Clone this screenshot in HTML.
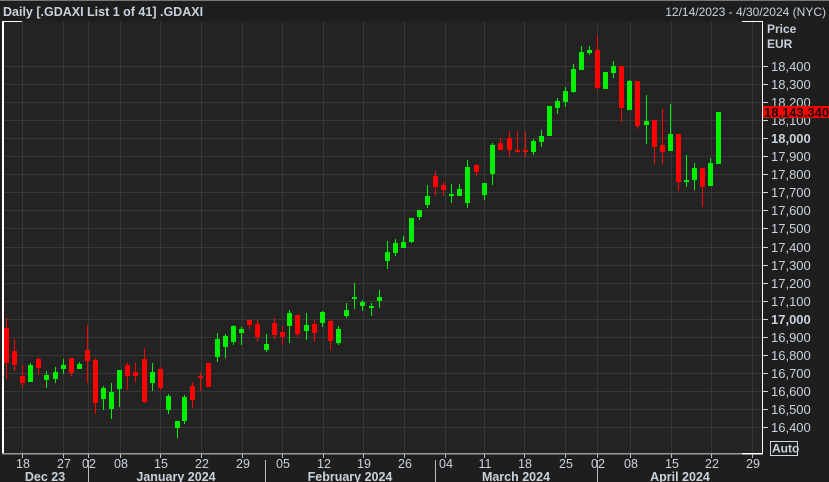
<!DOCTYPE html>
<html><head><meta charset="utf-8"><style>
html,body{margin:0;padding:0;background:#1e1e1f;width:829px;height:482px;overflow:hidden}
svg{display:block}
text{font-family:"Liberation Sans",sans-serif;fill:#c9d2dc}
</style></head><body>
<svg id="s" width="829" height="482" xmlns="http://www.w3.org/2000/svg">
<rect x="0" y="0" width="829" height="482" fill="#1e1e1f"/>
<rect x="0" y="0" width="829" height="1" fill="#777"/>
<rect x="2" y="21" width="760" height="432" fill="#222322"/>
<g id="grid"></g>
<g id="candles"></g>
<text x="3" y="16" font-size="12.5" font-weight="bold" fill="#c9d2dc">Daily [.GDAXI List 1 of 41] .GDAXI</text>
<text x="826" y="16" font-size="12" text-anchor="end">12/14/2023 - 4/30/2024 (NYC)</text>
<text x="767" y="33" font-size="12" font-weight="bold">Price</text>
<text x="767" y="48" font-size="12" font-weight="bold">EUR</text>
<g id="yax"></g>
<rect x="763" y="106" width="66" height="12" fill="#ff0000"/>
<text x="764" y="117" font-size="13" font-weight="bold" style="fill:#111">18,143.340</text>
<rect x="770.5" y="441.5" width="27" height="14" fill="none" stroke="#cfd6de"/>
<text x="772" y="452.5" font-size="12" font-weight="bold">Auto</text>
<rect x="2" y="21" width="2" height="433" fill="#fff"/>
<rect x="2" y="21" width="20" height="1" fill="#fff"/>
<rect x="742" y="21" width="20" height="1" fill="#fff"/>
<rect x="762" y="21" width="1" height="433" fill="#fff"/>
<rect x="2" y="453" width="740" height="1.5" fill="#999"/>
<rect x="742" y="453" width="21" height="1.5" fill="#fff"/>
<g id="xax"></g>
</svg>
<script>
var NS="http://www.w3.org/2000/svg";
function el(p,t,a,tx){var e=document.createElementNS(NS,t);for(var k in a)e.setAttribute(k,a[k]);if(tx!=null)e.textContent=tx;p.appendChild(e);return e;}
var grid=document.getElementById('grid'),yax=document.getElementById('yax'),xax=document.getElementById('xax'),cg=document.getElementById('candles');
for(var i=0;i<=20;i++){var p=18400-i*100;var y=Math.round(66+i*18.05);
 el(grid,'rect',{x:4,y:y,width:758,height:1,fill:'#363736'});
 el(yax,'rect',{x:763,y:y,width:5,height:1,fill:'#cfd6de'});
 var s=String(p).replace(/(\d\d)(\d\d\d)$/,'$1,$2');
 var a={x:771,y:y+5,'font-size':13};if(p%1000==0)a['font-weight']='bold';
 el(yax,'text',a,s);}
var ticks=[[22,'18'],[63,'27'],[88,'02'],[120,'08'],[160,'15'],[201,'22'],[242,'29'],[282,'05'],[323,'12'],[363,'19'],[404,'26'],[445,'04'],[484,'11'],[524,'18'],[565,'25'],[597,'02'],[630,'08'],[671,'15'],[711,'22'],[752,'29']];
ticks.forEach(function(t){el(grid,'rect',{x:t[0],y:22,width:1,height:431,fill:'#363736'});
 el(xax,'rect',{x:t[0],y:454,width:1,height:4,fill:'#bbb'});
 el(xax,'text',{x:t[0]+1,y:468,'font-size':12.5,'text-anchor':'middle'},t[1]);});
[[88,460],[265,460],[435,460],[597,460]].forEach(function(m){el(xax,'rect',{x:m[0],y:m[1],width:1,height:22,fill:'#bbb'});});
[[45,'Dec 23'],[176,'January 2024'],[350,'February 2024'],[516,'March 2024'],[680,'April 2024']].forEach(function(m){el(xax,'text',{x:m[0],y:481,'font-size':12.5,'font-weight':'bold','text-anchor':'middle'},m[1]);});
var C=[[6,318,379,328,363,'r'],[14,339,371,351,365,'r'],[22,365,388,376,383,'r'],[30,363,382,365,382,'g'],[38,357,375,359,368,'r'],[46,371,388,375,380,'g'],[55,367,383,372,379,'g'],[63,359,374,365,369,'g'],[71,358,376,358,373,'r'],[79,362,369,364,369,'g'],[87,325,383,350,361,'r'],[95,358,414,360,403,'r'],[103,386,410,388,399,'g'],[111,383,419,392,409,'g'],[119,370,407,370,389,'g'],[127,363,390,365,376,'r'],[135,363,382,372,376,'r'],[144,348,403,359,402,'r'],[152,363,391,372,383,'g'],[160,367,390,369,388,'r'],[168,394,414,396,410,'g'],[177,421,438,421,428,'g'],[184,395,424,397,421,'g'],[192,382,408,386,400,'r'],[200,372,391,376,378,'r'],[208,363,387,363,387,'r'],[217,333,362,339,357,'g'],[225,334,358,336,347,'g'],[233,325,345,326,342,'g'],[241,327,345,329,333,'g'],[249,320,329,320,325,'r'],[257,320,341,324,337,'r'],[266,334,352,344,350,'g'],[274,318,339,323,335,'r'],[282,326,345,332,337,'r'],[289,310,343,313,326,'g'],[297,315,337,315,334,'r'],[306,313,340,325,331,'g'],[314,320,342,324,333,'r'],[322,311,327,312,323,'g'],[330,320,350,321,341,'r'],[338,326,345,329,343,'g'],[346,303,318,310,316,'g'],[354,283,309,297,299,'g'],[362,300,311,302,306,'g'],[371,303,316,306,308,'g'],[379,290,308,297,301,'g'],[387,241,269,252,261,'g'],[395,239,256,243,253,'g'],[403,236,248,242,248,'g'],[411,218,243,218,242,'g'],[419,210,220,210,217,'g'],[427,185,208,196,205,'g'],[435,171,195,176,187,'r'],[443,182,196,185,190,'r'],[451,184,203,194,196,'g'],[459,184,196,189,196,'g'],[467,160,208,167,203,'g'],[476,164,176,165,172,'r'],[484,183,200,183,195,'g'],[492,143,185,145,174,'g'],[500,138,150,143,150,'r'],[509,131,157,138,150,'r'],[517,131,153,150,152,'r'],[525,131,157,150,152,'r'],[533,139,155,141,152,'g'],[541,130,147,136,142,'g'],[549,106,136,106,136,'g'],[557,98,114,101,108,'g'],[565,87,107,91,102,'g'],[573,64,93,69,92,'g'],[581,46,70,52,70,'g'],[589,46,55,50,53,'g'],[597,35,90,50,88,'r'],[605,72,89,72,89,'g'],[613,61,78,66,73,'g'],[621,66,122,66,108,'r'],[629,80,110,81,110,'g'],[637,81,129,81,126,'r'],[646,95,144,121,125,'g'],[654,120,164,120,147,'r'],[662,109,164,145,152,'r'],[670,104,151,134,151,'g'],[678,134,191,134,182,'r'],[686,155,187,180,182,'g'],[694,163,190,168,180,'g'],[702,168,207,168,187,'r'],[710,158,186,163,186,'g'],[718,112,164,112,164,'g']];
C.forEach(function(c){var col=c[5]=='g'?'#00f000':'#ff0000';
 el(cg,'rect',{x:c[0],y:c[1],width:1,height:c[2]-c[1],fill:col});
 el(cg,'rect',{x:c[0]-2,y:c[3],width:5,height:Math.max(2,c[4]-c[3]),fill:col});});
</script>
</body></html>
